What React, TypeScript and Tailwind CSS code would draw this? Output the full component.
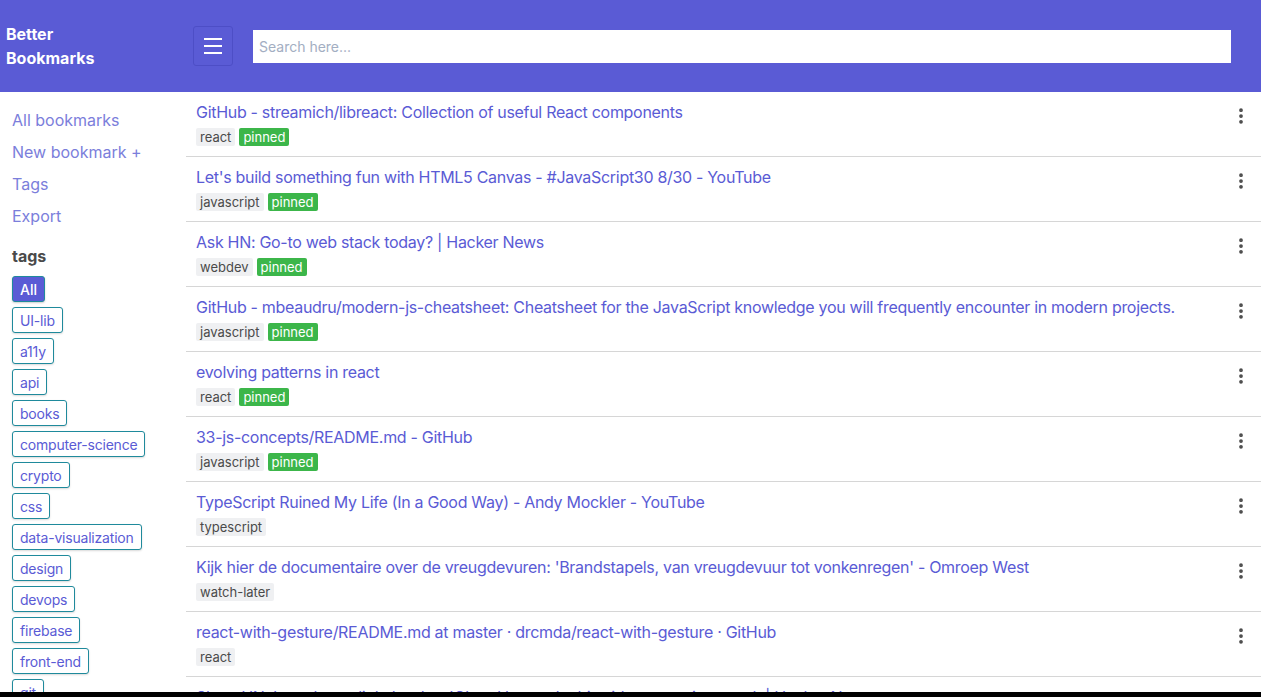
import { EllipsisVertical } from "lucide-react"

interface Bookmark {
  title: string
  tags: string[]
  pinned?: boolean
}

const bookmarks: Bookmark[] = [
  { title: "GitHub - streamich/libreact: Collection of useful React components", tags: ["react"], pinned: true },
  { title: "Let's build something fun with HTML5 Canvas - #JavaScript30 8/30 - YouTube", tags: ["javascript"], pinned: true },
  { title: "Ask HN: Go-to web stack today? | Hacker News", tags: ["webdev"], pinned: true },
  {
    title:
      "GitHub - mbeaudru/modern-js-cheatsheet: Cheatsheet for the JavaScript knowledge you will frequently encounter in modern projects.",
    tags: ["javascript"],
    pinned: true,
  },
  { title: "evolving patterns in react", tags: ["react"], pinned: true },
  { title: "33-js-concepts/README.md - GitHub", tags: ["javascript"], pinned: true },
  { title: "TypeScript Ruined My Life (In a Good Way) - Andy Mockler - YouTube", tags: ["typescript"] },
  {
    title:
      "Kijk hier de documentaire over de vreugdevuren: 'Brandstapels, van vreugdevuur tot vonkenregen' - Omroep West",
    tags: ["watch-later"],
  },
  { title: "react-with-gesture/README.md at master · drcmda/react-with-gesture · GitHub", tags: ["react"] },
  { title: "Show HN: I taught my little brother 'C' and he made this video game in a week | Hacker News", tags: ["gamedev"] },
  { title: "A Complete Guide to Grid | CSS-Tricks", tags: ["css"] },
]

const tags = [
  "UI-lib",
  "a11y",
  "api",
  "books",
  "computer-science",
  "crypto",
  "css",
  "data-visualization",
  "design",
  "devops",
  "firebase",
  "front-end",
  "git",
  "javascript",
  "react",
]

const links = ["All bookmarks", "New bookmark +", "Tags", "Export"]

function BookmarkRow({ bookmark }: { bookmark: Bookmark }) {
  return (
    <li className="flex items-start justify-between border-b border-[#d6d6d6] pl-[10px] pr-[10px] pt-[8px] pb-[10px]">
      <div className="flex flex-col gap-[4px]">
        <a className="text-[16px] leading-[24px] tracking-[-0.3px] text-[#5a5bd5]">{bookmark.title}</a>
        <div className="flex gap-[4px]">
          {bookmark.tags.map((t) => (
            <span key={t} className="rounded-[2px] bg-[#eff0f2] px-[4px] text-[13px] leading-[18px] text-[#4a4a4a]">
              {t}
            </span>
          ))}
          {bookmark.pinned && (
            <span className="rounded-[2px] bg-[#3cb64a] px-[4px] text-[13px] leading-[18px] text-white">pinned</span>
          )}
        </div>
      </div>
      <button className="mt-[6px] text-[#4a4a4a]">
        <EllipsisVertical size={20} strokeWidth={2.5} />
      </button>
    </li>
  )
}

export default function App() {
  return (
    <div className="min-h-screen bg-white font-['Inter',sans-serif]">
      <header className="flex h-[92px] items-center bg-[#5a5bd5] pr-[30px]">
        <div className="w-[193px] shrink-0 pl-[6px] text-[16px] font-bold leading-[24px] text-white">
          Better
          <br />
          Bookmarks
        </div>
        <button className="flex h-[40px] w-[40px] shrink-0 flex-col items-center justify-center gap-[5px] rounded-[3px] border border-[#4d4ec6]">
          <span className="h-[2px] w-[18px] bg-white" />
          <span className="h-[2px] w-[18px] bg-white" />
          <span className="h-[2px] w-[18px] bg-white" />
        </button>
        <input
          className="ml-[20px] h-[33px] flex-1 bg-white px-[6px] text-[14px] text-[#333] outline-none placeholder:text-[#a3aec2]"
          placeholder="Search here..."
        />
      </header>

      <div className="flex">
        <aside className="w-[186px] shrink-0 pl-[12px] pt-[12px]">
          <nav className="flex flex-col">
            {links.map((l) => (
              <a key={l} className="text-[16px] leading-[32px] text-[#7b7edb]">
                {l}
              </a>
            ))}
          </nav>
          <h3 className="mt-[12px] text-[16px] font-bold leading-[24px] text-[#4a4a4a]">tags</h3>
          <div className="mt-[8px] flex flex-col items-start gap-[5px]">
            <button className="h-[26px] rounded-[3px] border border-[#1f8a9c] bg-[#5a5bd5] px-[7px] text-[14px] font-medium text-white shadow-[0_1px_2px_rgba(0,0,0,0.2)]">
              All
            </button>
            {tags.map((t) => (
              <button
                key={t}
                className="h-[26px] rounded-[3px] border border-[#1f8a9c] bg-white px-[7px] text-[14px] tracking-[-0.2px] text-[#5a5bd5] shadow-[0_1px_2px_rgba(0,0,0,0.15)]"
              >
                {t}
              </button>
            ))}
          </div>
        </aside>

        <main className="flex-1">
          <ul>
            {bookmarks.map((b) => (
              <BookmarkRow key={b.title} bookmark={b} />
            ))}
          </ul>
        </main>
      </div>

      <div className="fixed bottom-0 left-0 h-[5px] w-full bg-black" />
    </div>
  )
}
